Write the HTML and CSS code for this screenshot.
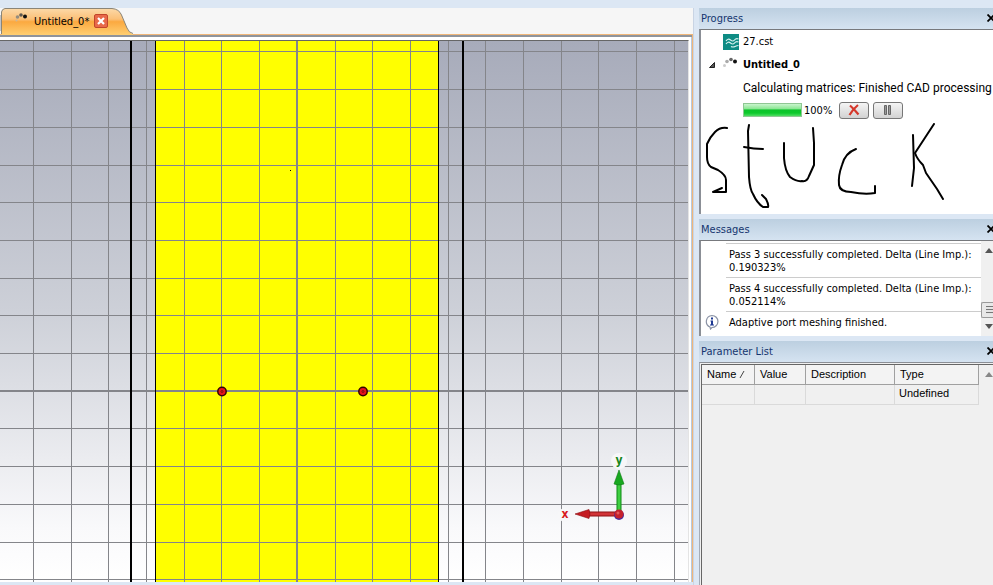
FILE: index.html
```html
<!DOCTYPE html>
<html lang="en">
<head>
    <meta charset="UTF-8">
    <meta name="viewport" content="width=device-width, initial-scale=1.0">
    <title>Untitled_0*</title>
    <link rel="stylesheet" href="styles.css">
</head>
<body>
    <div class="app">
        <main class="document">
            <div class="tabs">
                <div class="tab">
                    <svg class="tab-shape" width="134" height="27" viewBox="0 0 134 27" aria-hidden="true">
                        <defs>
                            <linearGradient id="tabFill" x1="0" y1="0" x2="0" y2="1">
                                <stop offset="0" stop-color="#fcd9a8"/>
                                <stop offset="0.4" stop-color="#fbc078"/>
                                <stop offset="0.5" stop-color="#fba940"/>
                                <stop offset="1" stop-color="#ffcf72"/>
                            </linearGradient>
                        </defs>
                        <path d="M0 7v16" stroke="#8b9099" fill="none"/>
                        <path d="M1.500 27V4Q2 1 5 .5H112Q119 1 121.500 7L127 20Q129 25 133 26V27Z" fill="url(#tabFill)"/>
                        <path d="M1.500 26V4Q2 1 5 .5H112Q119 1 121.500 7L127 20Q129 25 133 25.500" fill="none" stroke="#8b8577"/>
                    </svg>
                    <svg class="dots" width="14" height="10" viewBox="0 0 14 10" aria-hidden="true">
                        <circle cx="1.500" cy="8.500" r="1" fill="#c9b79c"/>
                        <circle cx="2.500" cy="5" r="1.800" fill="#958d80"/>
                        <circle cx="6" cy="3" r="1.800" fill="#5d5850"/>
                        <circle cx="10" cy="4.500" r="2" fill="#111"/>
                    </svg>
                    <span class="tab-title">Untitled_0*</span>
                    <button class="tab-close" type="button" aria-label="Close tab">
                        <svg width="8" height="8" viewBox="0 0 8 8"><path d="M1 1l6 6M7 1L1 7" stroke="#fff" stroke-width="2.200"/></svg>
                    </button>
                </div>
            </div>
            <div class="frame">
                <svg class="scene" viewBox="0 0 688 541" preserveAspectRatio="xMinYMin slice" role="img" aria-label="Model view">
                    <defs>
                        <linearGradient id="sky" x1="0" y1="0" x2="0" y2="1">
                            <stop offset="0" stop-color="#a7abba"/>
                            <stop offset="0.500" stop-color="#cdd0d8"/>
                            <stop offset="0.900" stop-color="#f9f9fb"/>
                            <stop offset="1" stop-color="#fff"/>
                        </linearGradient>
                        <linearGradient id="greenShaft">
                            <stop offset="0" stop-color="#0c8a14"/>
                            <stop offset="0.500" stop-color="#4be04c"/>
                            <stop offset="1" stop-color="#0c8a14"/>
                        </linearGradient>
                        <linearGradient id="redShaft" x1="0" y1="0" x2="0" y2="1">
                            <stop offset="0" stop-color="#8f1114"/>
                            <stop offset="0.500" stop-color="#e23c40"/>
                            <stop offset="1" stop-color="#8f1114"/>
                        </linearGradient>
                    </defs>
                    <rect width="688" height="541" fill="url(#sky)"/>
                    <rect x="156" width="282" height="541" fill="#ff0"/>

                    <!-- grid -->
                    <g fill="none" stroke="#84858a" shape-rendering="crispEdges">
                        <path d="M33.500 0V541M71.500 0V541M108.500 0V541M146.500 0V541M184.500 0V541M221.500 0V541M259.500 0V541M335.500 0V541M372.500 0V541M410.500 0V541M448.500 0V541M485.500 0V541M523.500 0V541M561.500 0V541M598.500 0V541M636.500 0V541M674.500 0V541"/>
                        <path d="M0 10.500H688M0 48.500H688M0 86.500H688M0 124.500H688M0 161.500H688M0 199.500H688M0 237.500H688M0 274.500H688M0 312.500H688M0 387.500H688M0 425.500H688M0 463.500H688M0 501.500H688M0 538.500H688"/>
                        <path d="M297 0V541M0 350H688" stroke-width="2"/>
                    </g>

                    <!-- conductor edges -->
                    <g fill="none" stroke="#000" shape-rendering="crispEdges">
                        <path d="M131 0V541M463 0V541" stroke-width="2"/>
                        <path d="M155.500 0V541M438.500 0V541"/>
                        <path d="M290 129.500h1"/>
                    </g>

                    <!-- pick points -->
                    <g stroke="#300" stroke-width="1.500">
                        <circle cx="222" cy="350.500" r="4.200" fill="#e8141c"/>
                        <circle cx="363" cy="350.500" r="4.200" fill="#e8141c"/>
                        <circle cx="222" cy="350.500" r="1" stroke="#7a0d10" stroke-width="1" fill="none"/>
                        <circle cx="363" cy="350.500" r="1" stroke="#7a0d10" stroke-width="1" fill="none"/>
                    </g>

                    <!-- axes -->
                    <circle cx="619" cy="420" r="8" fill="#f7f7f9"/>
                    <circle cx="565" cy="474" r="7" fill="#f7f7f9"/>
                    <rect x="616.500" y="440" width="5" height="32" fill="url(#greenShaft)"/>
                    <path d="M619 429L624 443Q619 445 614 443Z" fill="#18a820" stroke="#0b7a12" stroke-width=".6"/>
                    <rect x="588" y="470.500" width="29" height="5" fill="url(#redShaft)"/>
                    <path d="M575 473L589 468.500Q591 473 589 477.500Z" fill="#c41c22" stroke="#8a0e12" stroke-width=".6"/>
                    <circle cx="619" cy="474" r="5" fill="#4b2a9c"/>
                    <circle cx="619" cy="473" r="4.500" fill="#c5202c"/>
                    <circle cx="618" cy="472" r="1.500" fill="#e2595c"/>
                    <text class="axis axis-x" x="565" y="477">x</text>
                    <text class="axis axis-y" x="619" y="423">y</text>
                </svg>
            </div>
        </main>

        <aside class="docks">
            <section class="panel progress-panel">
                <header class="panel-head">
                    <h2>Progress</h2>
                    <button class="panel-close" type="button" aria-label="Close Progress">
                        <svg width="8" height="8" viewBox="0 0 8 8"><path d="M.5 .5l7 7M7.500 .5l-7 7" stroke="#000" stroke-width="1.800"/></svg>
                    </button>
                </header>
                <div class="panel-body">
                    <div class="job">
                        <svg class="job-icon" width="16" height="16" viewBox="0 0 16 16" aria-hidden="true">
                            <rect width="16" height="16" fill="#0e8c84"/>
                            <path d="M3 7q2-3 4.500-1t4 0 4-1M3 10q2-3 4.500-1t4 0 4-1M8 12.500q2 1 4 0t3.500-1" fill="none" stroke="#d9f3f0" stroke-width="1.200"/>
                        </svg>
                        <span>27.cst</span>
                    </div>
                    <div class="job">
                        <svg class="job-arrow" width="6" height="6" viewBox="0 0 6 6" aria-hidden="true"><path d="M5.500 .5v5h-5z" fill="#555" stroke="#222"/></svg>
                        <svg class="job-icon" width="16" height="16" viewBox="0 0 16 16" aria-hidden="true">
                            <circle cx="1.500" cy="8.500" r="1.500" fill="#ccc"/>
                            <circle cx="4" cy="4.500" r="1.800" fill="#aaa"/>
                            <circle cx="8" cy="2.500" r="1.800" fill="#666"/>
                            <circle cx="12" cy="4.500" r="2" fill="#111"/>
                        </svg>
                        <strong>Untitled_0</strong>
                    </div>
                    <label class="job-detail" for="jobProgress">Calculating matrices: Finished CAD processing</label>
                    <div class="job-bar">
                        <progress id="jobProgress" value="100" max="100"></progress>
                        <span class="percent">100%</span>
                        <button type="button" aria-label="Abort">
                            <svg width="12" height="12" viewBox="0 0 12 12"><path d="M2 1.500Q6 5 10.500 10.500M10 1Q5 5 1.500 11" fill="none" stroke="#d5382b" stroke-width="2.200"/></svg>
                        </button>
                        <button type="button" aria-label="Pause">
                            <svg width="10" height="10" viewBox="0 0 10 10"><path d="M1.500 .5h2v9h-2zM5.500 .5h2v9h-2z" fill="#999" stroke="#666"/></svg>
                        </button>
                    </div>
                    <svg class="scribble" width="240" height="88" viewBox="0 0 240 88" role="img" aria-label="Stuck">
                        <g fill="none" stroke="#000" stroke-width="2" stroke-linecap="round" stroke-linejoin="round">
                            <path d="M22 5Q15 4 10 9Q5 14 2 21V34Q2 41 6 44L13 47Q21 52 21 57V69H8L17 65"/>
                            <path d="M44 2L43 8L44 54Q45 67 48 71Q52 80 58 84H63Q64 82 61 76L57 72"/>
                            <path d="M39 24Q49 26 58 26"/>
                            <path d="M79 20V35Q80 48 85 54Q92 59 97 58Q102 59 104 53L109 42V20L108 5"/>
                            <path d="M151 26Q140 30 137 42Q133 53 134 62Q135 69 146 69Q160 72 170 70V63"/>
                            <path d="M208 12L209 45L207 63"/>
                            <path d="M229 1L210 30Q212 36 218 42L221 50L232 66L238 76"/>
                        </g>
                    </svg>
                </div>
            </section>

            <section class="panel messages-panel">
                <header class="panel-head">
                    <h2>Messages</h2>
                    <button class="panel-close" type="button" aria-label="Close Messages">
                        <svg width="8" height="8" viewBox="0 0 8 8"><path d="M.5 .5l7 7M7.500 .5l-7 7" stroke="#000" stroke-width="1.800"/></svg>
                    </button>
                </header>
                <div class="panel-body">
                    <ul class="messages">
                        <li><p>Pass 3 successfully completed. Delta (Line Imp.): 0.190323%</p></li>
                        <li><p>Pass 4 successfully completed. Delta (Line Imp.): 0.052114%</p></li>
                        <li>
                            <svg class="info" width="16" height="16" viewBox="0 0 16 16" aria-hidden="true">
                                <path d="M8 1.500a6 6 0 1 1-.1 12L6.500 15 6 13A6 6 0 0 1 8 1.500Z" fill="#fff" stroke="#8b93a5" stroke-width="1.200"/>
                                <path d="M7 3.500h2v2H7zM6.500 6.500H9v4h1v1H6v-1h1v-3h-.5z" fill="#1e3a94"/>
                            </svg>
                            <p>Adaptive port meshing finished.</p>
                        </li>
                    </ul>
                    <div class="scrollbar">
                        <svg width="8" height="5" viewBox="0 0 8 5" aria-hidden="true"><path d="M4 0l4 5H0z" fill="#555"/></svg>
                        <div class="thumb"></div>
                        <svg width="8" height="5" viewBox="0 0 8 5" aria-hidden="true"><path d="M0 0h8L4 5z" fill="#555"/></svg>
                    </div>
                </div>
            </section>

            <section class="panel params-panel">
                <header class="panel-head">
                    <h2>Parameter List</h2>
                    <button class="panel-close" type="button" aria-label="Close Parameter List">
                        <svg width="8" height="8" viewBox="0 0 8 8"><path d="M.5 .5l7 7M7.500 .5l-7 7" stroke="#000" stroke-width="1.800"/></svg>
                    </button>
                </header>
                <div class="panel-body">
                    <div class="params-view">
                        <table class="params">
                            <thead>
                                <tr>
                                    <th class="col-name">Name <svg width="6" height="7" viewBox="0 0 6 7" aria-hidden="true"><path d="M1 7L5 0" stroke="#444"/></svg></th>
                                    <th class="col-value">Value</th>
                                    <th>Description</th>
                                    <th class="col-type">Type</th>
                                </tr>
                            </thead>
                            <tbody>
                                <tr><td></td><td></td><td></td><td>Undefined</td></tr>
                            </tbody>
                        </table>
                        <div class="scrollbar">
                            <svg width="8" height="5" viewBox="0 0 8 5" aria-hidden="true"><path d="M4 0l4 5H0z" fill="#888"/></svg>
                        </div>
                    </div>
                </div>
            </section>
        </aside>
    </div>
</body>
</html>
```
FILE: styles.css
```css
* {
    box-sizing: border-box;
}
body {
    margin: 0;
    background: #dce7f4;
    color: #000;
    font-family: Tahoma, "DejaVu Sans Condensed", "Noto Sans", sans-serif;
    font-size: 11px;
    line-height: 13px;
}
h2, p, ul {
    margin: 0;
    padding: 0;
}
button {
    padding: 0;
    font: inherit;
}
svg {
    display: block;
    flex: none;
}
.app {
    display: grid;
    grid-template-columns: minmax(0, 1fr) 294px;
    gap: 5px;
    height: 100vh;
    padding-top: 8px;
    overflow: hidden;
}

/* document area */
.document {
    display: flex;
    flex-direction: column;
    min-width: 0;
    min-height: 0;
    border-right: 1px solid #c9d4e4;
}
.tabs {
    height: 26px;
    background: #f6f6f6;
}
.tab {
    position: relative;
    display: flex;
    align-items: center;
    height: 26px;
    width: 134px;
    padding-left: 15px;
}
.tab-shape {
    position: absolute;
    left: 0;
    top: 0;
}
.dots, .tab-title, .tab-close {
    position: relative;
}
.dots {
    margin-bottom: 8px;
}
.tab-title {
    margin-left: 5px;
}
.tab-close {
    display: grid;
    place-items: center;
    width: 14px;
    height: 14px;
    margin-left: auto;
    margin-right: 26px;
    background: #e8694a;
    border: 1px solid #c2452b;
    border-radius: 2px;
}
.frame {
    flex: 1;
    min-height: 0;
    margin-bottom: 3px;
    padding: 5px 3px 0 0;
    background: #fff;
    border-top: 1px solid #f0b679;
    border-right: 1px solid #f0b679;
    box-shadow: inset 0 2px #8f949c, inset -1px 0 #b9c9dc;
}
.scene {
    width: 100%;
    height: 100%;
    border-top: 1px solid #666;
    border-right: 1px solid #e4e4e4;
}
.axis {
    font-size: 12px;
    font-weight: bold;
    text-anchor: middle;
}
.axis-x {
    fill: #d81920;
}
.axis-y {
    fill: #16851b;
}

/* docked panels */
.docks {
    display: flex;
    flex-direction: column;
    gap: 5px;
    min-width: 0;
    min-height: 0;
}
.panel {
    display: flex;
    flex-direction: column;
}
.panel-head {
    display: flex;
    align-items: center;
    justify-content: space-between;
    height: 21px;
    padding: 0 0 1px 2px;
    overflow: hidden;
    background: linear-gradient(#bccfe0, #d5e3f1);
}
.panel-head h2 {
    color: #15356f;
    font-size: 11px;
    font-weight: normal;
}
.panel-close {
    width: 6px;
    height: 8px;
    background: none;
    border: 0;
}
.panel-body {
    flex: 1;
    min-height: 0;
    background: #fff;
    border-top: 1px solid #77797d;
    border-left: 2px solid #8b8f96;
}

/* progress */
.progress-panel {
    height: 206px;
}
.job {
    display: flex;
    align-items: center;
    justify-content: flex-start;
    height: 23px;
    padding-left: 22px;
}
.job-icon {
    margin-right: 4px;
}
.job-arrow {
    margin-left: -14px;
    margin-right: 8px;
}
.job-detail {
    display: block;
    padding: 6px 0 6px 42px;
    font-family: Roboto, sans-serif;
    font-size: 12px;
    white-space: nowrap;
}
.job-bar {
    display: flex;
    align-items: center;
    height: 18px;
    padding-left: 42px;
}
.job-bar button {
    display: grid;
    place-items: center;
    width: 30px;
    height: 17px;
    margin-right: 4px;
    background: linear-gradient(#f5f5f5, #d2d2d2);
    border: 1px solid #777;
    border-radius: 3px;
}
.percent {
    width: 37px;
    padding-left: 2px;
}
progress {
    width: 59px;
    height: 14px;
    appearance: none;
    border: 1px solid #8fc793;
}
progress::-webkit-progress-bar {
    background: #e6e6e6;
}
progress::-webkit-progress-value {
    background: linear-gradient(#c9f5cd, #8be693 40%, #0bc42a 50%, #0cc92b 75%, #4fdd62);
}
.scribble {
    margin: 4px 0 0 4px;
}

/* messages */
.messages-panel {
    height: 117px;
}
.messages-panel .panel-body {
    display: flex;
}
.messages {
    flex: 1;
    padding-top: 2px;
    list-style: none;
}
.messages li {
    display: flex;
    justify-content: flex-end;
    padding-left: 3px;
}
.messages p {
    flex: 1;
    padding: 4px 0 3px 3px;
    border-top: 1px solid #ccc;
}
.messages li p:first-child {
    margin-left: 22px;
}
.info {
    margin: 3px 6px 0 0;
}
.scrollbar {
    display: flex;
    flex-direction: column;
    align-items: flex-end;
    width: 12px;
    padding: 7px 0;
    overflow: hidden;
    background: #f0f0f0;
}
.thumb {
    width: 12px;
    height: 16px;
    margin: auto 0 6px;
    background: repeating-linear-gradient(#777 0 1px, #e4e4e4 1px 3px) 4px 3px / 8px 8px no-repeat #e8e8e8;
    border: 1px solid #999;
    border-right: 0;
    border-radius: 2px 0 0 2px;
}

/* parameter list */
.params-panel {
    flex: 1;
}
.params-panel .panel-body {
    padding: 1px 0 0 1px;
    background: #f0f0f0;
    border-top: 1px solid #8b8f96;
    border-left: 1px solid #a5adb8;
}
.params-view {
    display: flex;
    height: 100%;
    border-top: 1px solid #666;
    border-left: 1px solid #666;
}
.params {
    flex: 1;
    align-self: flex-start;
    border-collapse: separate;
    border-spacing: 0;
    table-layout: fixed;
    font-family: "Liberation Sans", Arial, sans-serif;
}
.params th, .params td {
    height: 20px;
    padding: 0 5px 1px;
    text-align: left;
    font-weight: normal;
}
.params th {
    background: #f3f3f3;
    border-right: 1px solid #a0a0a0;
    border-bottom: 1px solid #a0a0a0;
}
.params td {
    padding: 0 4px 3px;
    border-right: 1px solid #dadada;
    border-bottom: 1px solid #dadada;
}
.params th svg {
    display: inline-block;
}
.col-name {
    width: 53px;
}
.col-value {
    width: 51px;
}
.col-type {
    width: 84px;
}
.params-view .scrollbar {
    width: 14px;
}
```
